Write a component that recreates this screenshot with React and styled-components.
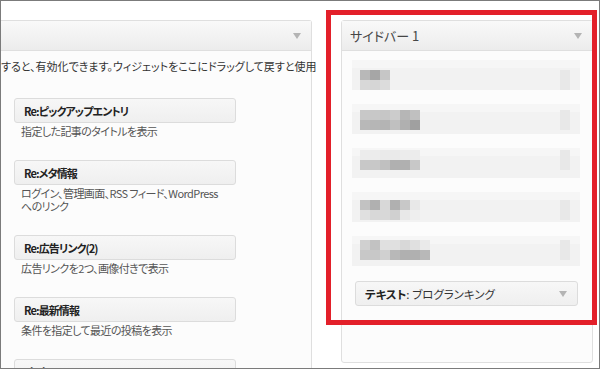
import React from 'react'
import styled, { createGlobalStyle } from 'styled-components'

const GlobalStyle = createGlobalStyle`
  html, body {
    margin: 0;
    padding: 0;
    background: #fff;
  }
  body {
    font-family: "Noto Sans CJK JP", "Liberation Sans", sans-serif;
    font-feature-settings: "palt";
  }
`

const Frame = styled.div`
  position: relative;
  width: 600px;
  height: 369px;
  box-sizing: border-box;
  border: 1px solid #7b7b7b;
  overflow: hidden;
  display: flex;
  align-items: flex-start;
  gap: 29px;
  padding-top: 19px;
  background: #fff;
`

const Panel = styled.div`
  box-sizing: border-box;
  flex: none;
  width: ${({ $w }) => $w}px;
  height: ${({ $h }) => $h}px;
  border: 1px solid #dfdfdf;
  border-left: ${({ $cut }) => ($cut ? 'none' : '1px solid #dfdfdf')};
  border-radius: ${({ $cut }) => ($cut ? '0 3px 3px 0' : '3px')};
  background: #fcfcfc;
`

const PanelHead = styled.div`
  height: 29px;
  border-bottom: 1px solid #dfdfdf;
  background: linear-gradient(to bottom, #f9f9f9, #ececec);
  display: flex;
  align-items: center;
  justify-content: space-between;
  padding: 0 10px 0 8px;
  font-size: 13px;
  color: #464646;
`

const Arrow = styled.span`
  width: 0;
  height: 0;
  border-left: 4px solid transparent;
  border-right: 4px solid transparent;
  border-top: 6px solid #b4b4b4;
`

const LeftBody = styled.div`
  padding-top: 8px;
`

const Intro = styled.div`
  font-size: 11px;
  line-height: 14px;
  color: #333;
  white-space: nowrap;
  margin-bottom: 25px;
`

const WidgetList = styled.div`
  margin-left: 13px;
  width: 222px;
`

const Widget = styled.div`
  box-sizing: border-box;
  height: 25px;
  border: 1px solid #dcdcdc;
  border-radius: 3px;
  background: linear-gradient(to bottom, #f7f7f7, #efefef);
  padding: 0 10px 0 9px;
  display: flex;
  align-items: center;
  justify-content: space-between;
  font-size: 11px;
  font-weight: 700;
  letter-spacing: -0.9px;
  color: #222;
`

const Desc = styled.div`
  margin: 2px 0 22px;
  padding-left: 7px;
  font-size: 11px;
  line-height: 13px;
  letter-spacing: -0.6px;
  white-space: nowrap;
  color: #555;
`

const SideBody = styled.div`
  padding: 9px 11px 0 10px;
  display: flex;
  flex-direction: column;
`

const Rows = styled.div`
  display: flex;
  flex-direction: column;
  gap: 14px;
  margin-bottom: 15px;
`

const Row = styled.svg`
  display: block;
  width: 228px;
  height: 30px;
`

const TextWidget = styled(Widget)`
  margin: 0 3px;
  font-size: 11.5px;
  font-weight: 400;
  letter-spacing: 0;
  color: #333;
  b {
    font-weight: 700;
    color: #222;
  }
`

const RedMark = styled.div`
  position: absolute;
  left: 325px;
  top: 9px;
  width: 271px;
  height: 315px;
  box-sizing: border-box;
  border: 5px solid #e3202a;
`

const widgets = [
  { title: 'Re:ピックアップエントリ', desc: ['指定した記事のタイトルを表示'] },
  { title: 'Re:メタ情報', desc: ['ログイン、管理画面、RSS フィード、WordPress', 'へのリンク'] },
  { title: 'Re:広告リンク(2)', desc: ['広告リンクを2つ、画像付きで表示'] },
  { title: 'Re:最新情報', desc: ['条件を指定して最近の投稿を表示'] },
  { title: 'Similar Posts +', desc: [''] },
]

// blurred widget rows: [y offset, top shades, bottom shades]
const mosaic = [
  [10, ['b8', 'a6', 'c6'], ['d8', 'd6', 'dc']],
  [6, ['c8', 'c8', 'c6', 'cc', 'b6', 'c0'], ['b8', 'b6', 'b4', 'c0', 'b0', 'a0']],
  [2, ['ec', 'ec', 'ea', 'ea', 'ec', 'ec'], ['c8', 'c8', 'c0', 'b0', 'b0', 'c8']],
  [8, ['c2', 'b0', 'd8', 'b0', 'c8', 'e8'], ['e0', 'd8', 'd8', 'd0', 'e8', 'ee']],
  [4, ['d0', 'c2', 'e0', 'e0', 'd8', 'e0', 'ea'], ['c8', 'c8', 'd0', 'b8', 'b0', 'b0', 'b8']],
]

const grey = (c) => '#' + c + c + c

const Blur = ({ y, top, bottom }) => (
  <Row viewBox="0 0 228 30">
    <rect width="228" height="30" fill="#f2f2f2" />
    <rect width="228" height="8" fill="#f6f6f6" />
    {top.map((c, i) => (
      <rect key={'t' + i} x={8 + i * 10} y={y} width="10" height="10" fill={grey(c)} />
    ))}
    {bottom.map((c, i) => (
      <rect key={'b' + i} x={8 + i * 10} y={y + 10} width="10" height="10" fill={grey(c)} />
    ))}
    <rect x="208" y={y} width="10" height="20" fill="#e8e8e8" />
  </Row>
)

export default function App() {
  return (
    <>
      <GlobalStyle />
      <Frame>
        <Panel $w={311} $h={400} $cut>
          <PanelHead>
            <span />
            <Arrow />
          </PanelHead>
          <LeftBody>
            <Intro>すると、有効化できます。ウィジェットをここにドラッグして戻すと使用</Intro>
            <WidgetList>
              {widgets.map((w) => (
                <div key={w.title}>
                  <Widget>{w.title}</Widget>
                  <Desc>
                    {w.desc.map((line, i) => (
                      <div key={i}>{line}</div>
                    ))}
                  </Desc>
                </div>
              ))}
            </WidgetList>
          </LeftBody>
        </Panel>
        <Panel $w={252} $h={343}>
          <PanelHead>
            <span>サイドバー 1</span>
            <Arrow />
          </PanelHead>
          <SideBody>
            <Rows>
              {mosaic.map(([y, top, bottom], i) => (
                <Blur key={i} y={y} top={top} bottom={bottom} />
              ))}
            </Rows>
            <TextWidget>
              <span>
                <b>テキスト</b>: ブログランキング
              </span>
              <Arrow />
            </TextWidget>
          </SideBody>
        </Panel>
        <RedMark />
      </Frame>
    </>
  )
}
